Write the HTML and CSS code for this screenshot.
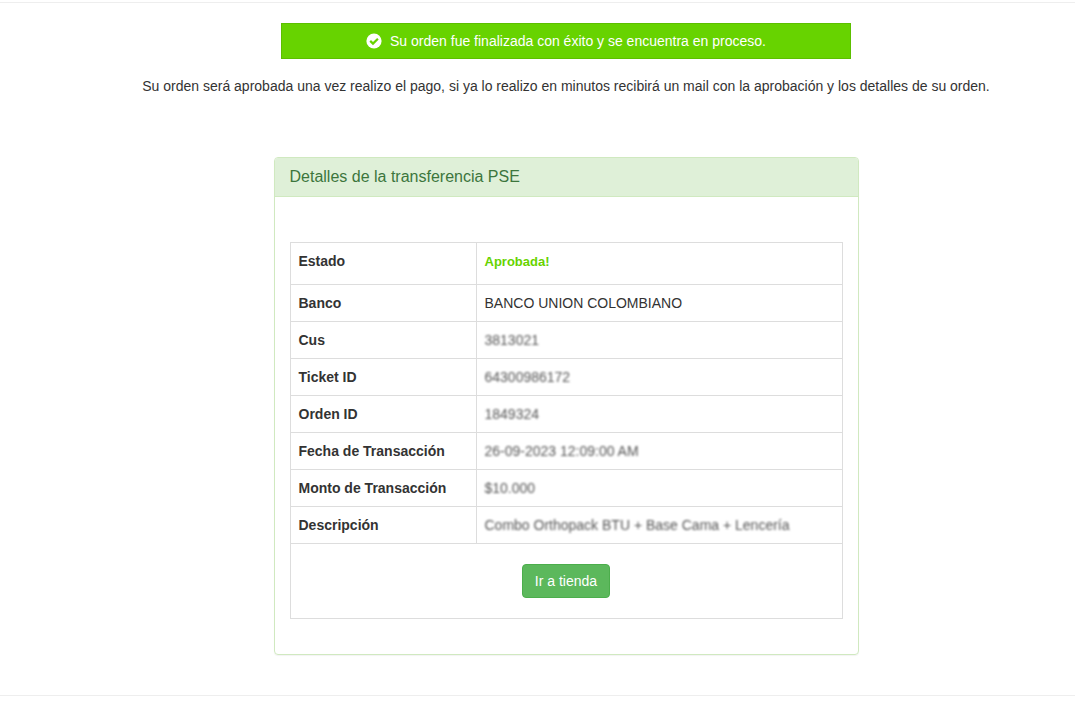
FILE: index.html
```html
<!DOCTYPE html>
<html lang="es">
<head>
<meta charset="utf-8">
<meta name="viewport" content="width=device-width, initial-scale=1">
<title>Detalles de la transferencia PSE</title>
<link rel="stylesheet" href="styles.css">
</head>
<body>
<main class="page">
  <div class="notice" role="status">
    <svg class="notice-icon" viewBox="0 0 16 16" aria-hidden="true">
      <circle cx="8" cy="8" r="7.6" fill="#fff"/>
      <path d="M4.2 7.9 7 10.6 11.9 5.8" fill="none" stroke="#67d300" stroke-width="2.2"/>
    </svg>
    <span>Su orden fue finalizada con éxito y se encuentra en proceso.</span>
  </div>
  <p class="message">Su orden será aprobada una vez realizo el pago, si ya lo realizo en minutos recibirá un mail con la aprobación y los detalles de su orden.</p>
  <section class="panel">
    <h1 class="panel-heading">Detalles de la transferencia PSE</h1>
    <div class="panel-body">
      <table class="details">
        <tbody>
          <tr class="row-status"><th scope="row">Estado</th><td><strong class="approved">Aprobada!</strong></td></tr>
          <tr><th scope="row">Banco</th><td>BANCO UNION COLOMBIANO</td></tr>
          <tr><th scope="row">Cus</th><td><span class="masked">3813021</span></td></tr>
          <tr><th scope="row">Ticket ID</th><td><span class="masked">64300986172</span></td></tr>
          <tr><th scope="row">Orden ID</th><td><span class="masked">1849324</span></td></tr>
          <tr><th scope="row">Fecha de Transacción</th><td><span class="masked">26-09-2023 12:09:00 AM</span></td></tr>
          <tr><th scope="row">Monto de Transacción</th><td><span class="masked">$10.000</span></td></tr>
          <tr><th scope="row">Descripción</th><td><span class="masked">Combo Orthopack BTU + Base Cama + Lencería</span></td></tr>
          <tr><td class="actions" colspan="2"><button class="button" type="button">Ir a tienda</button></td></tr>
        </tbody>
      </table>
    </div>
  </section>
</main>
</body>
</html>
```
FILE: styles.css
```css
* { box-sizing: border-box; }

body {
  margin: 0;
  background: #fff;
  color: #333;
  font: 14px/20px "Liberation Sans", Arial, sans-serif;
}

.page {
  display: flex;
  flex-direction: column;
  align-items: center;
  margin-top: 2px;
  padding: 20px 0 40px 57px;
  border-top: 1px solid #eee;
  border-bottom: 1px solid #eee;
}

.notice {
  display: flex;
  align-items: center;
  justify-content: center;
  gap: 8px;
  width: 100%;
  max-width: 570px;
  padding: 7px;
  border: 1px solid #5cbf00;
  background: #67d300;
  color: #fff;
}

.notice-icon {
  flex: none;
  width: 16px;
  height: 16px;
}

.message {
  margin: 17px 0 61px;
  text-align: center;
}

.panel {
  width: 100%;
  max-width: 585px;
  border: 1px solid #d0e9c0;
  border-radius: 4px;
  box-shadow: 0 1px 1px rgba(0, 0, 0, 0.05);
}

.panel-heading {
  margin: 0;
  padding: 10px 15px;
  border-bottom: 1px solid #d0e9c0;
  border-radius: 3px 3px 0 0;
  background: #dff0d8;
  color: #3c763d;
  font-size: 16px;
  font-weight: 400;
  line-height: 18px;
}

.panel-body { padding: 45px 15px 35px; }

.details {
  width: 100%;
  border-collapse: collapse;
}

.details th,
.details td {
  padding: 8px;
  border: 1px solid #ddd;
  text-align: left;
  vertical-align: top;
}

.details th { width: 186px; }

.row-status { height: 42px; }

.approved {
  color: #67d300;
  font-size: 13px;
}

.masked {
  color: #555;
  filter: blur(1px);
}

.details .actions {
  padding: 20px 8px;
  text-align: center;
}

.button {
  display: inline-block;
  padding: 6px 12px;
  border: 1px solid #4cae4c;
  border-radius: 4px;
  background: #5cb85c;
  color: #fff;
  font: inherit;
  vertical-align: top;
  cursor: pointer;
}
```
